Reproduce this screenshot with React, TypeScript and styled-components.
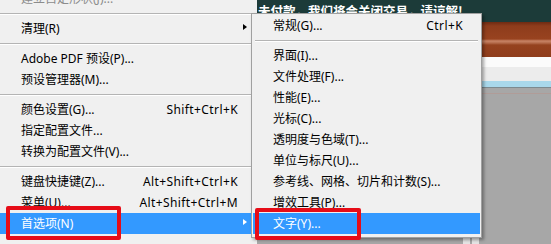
import React from "react";
import styled, { createGlobalStyle } from "styled-components";

const GlobalStyle = createGlobalStyle`
  html, body { margin: 0; padding: 0; background: #a7a7a7; }
  body { font-family: "Noto Sans", "Noto Sans CJK SC", sans-serif; }
  * { box-sizing: border-box; }
`;

const Screen = styled.div`
  position: relative;
  width: 551px;
  height: 244px;
  overflow: hidden;
  display: flex;
`;

const MainMenu = styled.div`
  flex: none;
  width: 257px;
  background: #f0f0f0;
  overflow: hidden;
`;

const MenuList = styled.div<{ $lift?: number }>`
  display: flex;
  flex-direction: column;
  margin-top: ${(p) => -(p.$lift ?? 0)}px;
`;

const Row = styled.div<{ $active?: boolean; $disabled?: boolean; $lead: number; $trail: number }>`
  display: flex;
  align-items: center;
  height: 21px;
  padding: 0 ${(p) => p.$trail}px 0 ${(p) => p.$lead}px;
  background: ${(p) => (p.$active ? "#3399ff" : "transparent")};
  color: ${(p) => (p.$active ? "#ffffff" : p.$disabled ? "#8c8c8c" : "#000000")};
  font-size: 12px;
  line-height: 21px;
  white-space: nowrap;
`;

const Label = styled.span`
  flex: 1;
`;

const Shortcut = styled.span`
  letter-spacing: 0.4px;
`;

const ArrowSlot = styled.span`
  flex: none;
  align-self: flex-start;
  width: 19px;
  height: 21px;
  padding: 6px 0 0 5px;
`;

const Arrow = styled.span`
  display: block;
  width: 0;
  height: 0;
  border-left: 4px solid currentColor;
  border-top: 3.5px solid transparent;
  border-bottom: 3.5px solid transparent;
`;

const Divider = styled.div<{ $inset: number }>`
  height: 9px;
  padding: 4px ${(p) => p.$inset}px 0;
  &::before {
    content: "";
    display: block;
    height: 1px;
    background: #b4b4b4;
    box-shadow: 0 1px 0 #ffffff;
  }
`;

const Backdrop = styled.div`
  flex: 1;
  display: flex;
  flex-direction: column;
`;

const Banner = styled.div`
  height: 22px;
  flex: none;
  background: #1c3b39;
  padding: 3px 0 0 1px;
  color: #ffffff;
  font-family: "Noto Sans CJK SC", sans-serif;
  font-size: 12.5px;
  font-weight: 700;
  line-height: 15px;
  white-space: nowrap;
`;

const RustBand = styled.div`
  height: 35px;
  flex: none;
  background: linear-gradient(
    to bottom,
    #6e2a12 0px,
    #8e3c1c 4px,
    #98431f 17px,
    #c88466 19px,
    #b46a4a 21px,
    #95421f 23px,
    #8f3d1c 35px
  );
`;

const Band = styled.div<{ $h: number; $c: string }>`
  height: ${(p) => p.$h}px;
  flex: none;
  background: ${(p) => p.$c};
`;

const Canvas = styled.div`
  flex: 1;
  background: linear-gradient(to bottom, #a7a7a7 0px, #a7a7a7 5px, #b09c98 5px, #b09c98 6px, #a7a7a7 6px);
  display: flex;
  align-items: flex-end;
  padding-left: 206px;
  gap: 2px;
`;

const Tab = styled.div`
  width: 7px;
  height: 6px;
  background: #e4e4e4;
`;

const Submenu = styled.div`
  position: absolute;
  left: 251px;
  top: 13px;
  width: 231px;
  border: 1px solid #a0a0a0;
  padding: 1px 1px 3px;
  background: #f0f0f0;
  box-shadow: 2px 2px 3px rgba(0, 0, 0, 0.35);
  display: flex;
  flex-direction: column;
`;

const Callout = styled.div<{ $x: number; $y: number; $w: number; $h: number }>`
  position: absolute;
  left: ${(p) => p.$x}px;
  top: ${(p) => p.$y}px;
  width: ${(p) => p.$w}px;
  height: ${(p) => p.$h}px;
  border: 4px solid #e60c17;
  border-radius: 2px;
  pointer-events: none;
`;

type Entry =
  | { kind: "sep" }
  | { kind: "item"; label: string; shortcut?: string; sub?: boolean; active?: boolean; disabled?: boolean };

const mainEntries: Entry[] = [
  { kind: "item", label: "建立自定形状(J)...", disabled: true },
  { kind: "sep" },
  { kind: "item", label: "清理(R)", sub: true },
  { kind: "sep" },
  { kind: "item", label: "Adobe PDF 预设(P)..." },
  { kind: "item", label: "预设管理器(M)..." },
  { kind: "sep" },
  { kind: "item", label: "颜色设置(G)...", shortcut: "Shift+Ctrl+K" },
  { kind: "item", label: "指定配置文件..." },
  { kind: "item", label: "转换为配置文件(V)..." },
  { kind: "sep" },
  { kind: "item", label: "键盘快捷键(Z)...", shortcut: "Alt+Shift+Ctrl+K" },
  { kind: "item", label: "菜单(U)...", shortcut: "Alt+Shift+Ctrl+M" },
  { kind: "item", label: "首选项(N)", sub: true, active: true },
];

const subEntries: Entry[] = [
  { kind: "item", label: "常规(G)...", shortcut: "Ctrl+K" },
  { kind: "sep" },
  { kind: "item", label: "界面(I)..." },
  { kind: "item", label: "文件处理(F)..." },
  { kind: "item", label: "性能(E)..." },
  { kind: "item", label: "光标(C)..." },
  { kind: "item", label: "透明度与色域(T)..." },
  { kind: "item", label: "单位与标尺(U)..." },
  { kind: "item", label: "参考线、网格、切片和计数(S)..." },
  { kind: "item", label: "增效工具(P)..." },
  { kind: "item", label: "文字(Y)...", active: true },
];

export default function App() {
  return (
    <>
      <GlobalStyle />
      <Screen>
        <MainMenu>
          <MenuList $lift={12}>
            {mainEntries.map((e, i) =>
              e.kind === "sep" ? (
                <Divider key={i} $inset={0} />
              ) : (
                <Row key={i} $lead={21} $trail={0} $active={e.active} $disabled={e.disabled}>
                  <Label>{e.label}</Label>
                  {e.shortcut && <Shortcut>{e.shortcut}</Shortcut>}
                  <ArrowSlot>{e.sub && <Arrow />}</ArrowSlot>
                </Row>
              )
            )}
          </MenuList>
        </MainMenu>
        <Backdrop>
          <Banner>未付款，我们将会关闭交易，请谅解!</Banner>
          <RustBand />
          <Band $h={10} $c="#fbfbfb" />
          <Band $h={14} $c="#ececec" />
          <Band $h={6} $c="#a9d8eb" />
          <Band $h={1} $c="#7d8a8f" />
          <Canvas>
            <Tab />
            <Tab />
          </Canvas>
        </Backdrop>
        <Submenu>
          {subEntries.map((e, i) =>
            e.kind === "sep" ? (
              <Divider key={i} $inset={2} />
            ) : (
              <Row key={i} $lead={20} $trail={17} $active={e.active}>
                <Label>{e.label}</Label>
                {e.shortcut && <Shortcut>{e.shortcut}</Shortcut>}
              </Row>
            )
          )}
        </Submenu>
        <Callout $x={6} $y={206} $w={115} $h={34} />
        <Callout $x={255} $y={208} $w={106} $h={32} />
      </Screen>
    </>
  );
}
